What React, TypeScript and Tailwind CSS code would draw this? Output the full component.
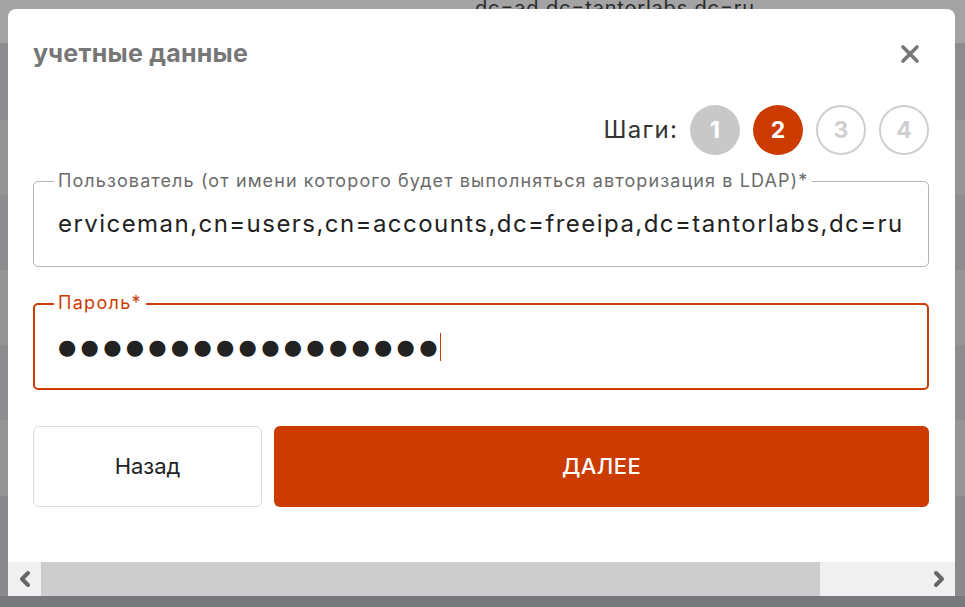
import { ChevronLeft, ChevronRight } from "lucide-react";

const USER_DN =
  "erviceman,cn=users,cn=accounts,dc=freeipa,dc=tantorlabs,dc=ru";

// полосы строк таблицы под затемнением
const BANDS = [
  "h-[43px] bg-[#a3a3a3]",
  "h-[77px] bg-[#8d8d8f]",
  "h-[75px] bg-[#959596]",
  "h-[75px] bg-[#8d8d8f]",
  "h-[75px] bg-[#959596]",
  "h-[75px] bg-[#8d8d8f]",
  "h-[76px] bg-[#959596]",
  "flex-1 bg-[#8a8a8c]",
];

function Steps({ current }: { current: number }) {
  return (
    <div className="flex items-center justify-end gap-[13px]">
      <span className="mr-[-1px] text-[24px] tracking-[1.2px] text-[#333]">Шаги:</span>
      {[1, 2, 3, 4].map((n) => {
        const cls =
          n < current
            ? "bg-[#c8c8c8] text-white"
            : n === current
              ? "bg-[#cc3b01] text-white"
              : "border-2 border-[#cfcfcf] text-[#cfcfcf]";
        return (
          <div
            key={n}
            className={`flex h-[50px] w-[50px] items-center justify-center rounded-full text-[23px] font-bold ${cls}`}
          >
            {n}
          </div>
        );
      })}
    </div>
  );
}

export default function App() {
  return (
    <div className="relative h-[607px] w-[965px] overflow-hidden font-['Inter',sans-serif]">
      {/* фон страницы под модалкой */}
      <div className="flex h-full flex-col">
        {BANDS.map((b, i) => (
          <div key={i} className={b}>
            {i === 0 && (
              <div className="ml-[475px] mt-[-4px] text-[20px] leading-[24px] tracking-[0.04em] text-[#2a2a2a]">
                dc=ad,dc=tantorlabs,dc=ru
              </div>
            )}
          </div>
        ))}
        <div className="h-[11px] bg-[#77787b]" />
      </div>

      {/* модальное окно */}
      <div className="absolute left-[8px] top-[9px] flex h-[587px] w-[947px] flex-col rounded-t-[8px] bg-white">
        <div className="flex flex-1 flex-col pl-[25px] pr-[26px]">
          <div className="flex h-[96px] items-center justify-between pb-[6px]">
            <h2 className="text-[25px] font-bold tracking-[0.01em] text-[#777]">
              учетные данные
            </h2>
            <button type="button" aria-label="Закрыть" className="mr-[5px] p-1">
              <svg width="20" height="20" viewBox="0 0 20 20">
                <path
                  d="M3 3 L17 17 M17 3 L3 17"
                  stroke="#777"
                  strokeWidth="3.6"
                  strokeLinecap="round"
                />
              </svg>
            </button>
          </div>

          <Steps current={2} />

          {/* пользователь */}
          <div className="relative mt-[26px] flex h-[86px] items-center rounded-[5px] border border-[#b3b3b3] pl-[24px]">
            <span className="absolute left-[20px] top-[-12px] bg-white px-[4px] text-[18px] leading-[22px] tracking-[1.1px] text-[#6b6b6b]">
              Пользователь (от имени которого будет выполняться авторизация в LDAP)*
            </span>
            <span className="whitespace-nowrap text-[24px] tracking-[1.45px] text-[#222]">
              {USER_DN}
            </span>
          </div>

          {/* пароль */}
          <div className="relative mt-[36px] flex h-[87px] items-center rounded-[5px] border-2 border-[#cc3b01] pl-[23px]">
            <span className="absolute left-[19px] top-[-13px] bg-white px-[4px] text-[18px] leading-[22px] tracking-[1.3px] text-[#cc3b01]">
              Пароль*
            </span>
            <span className="font-['DejaVu_Sans',sans-serif] text-[21px] leading-[28px] tracking-[4.25px] text-[#222]">
              {"●".repeat(17)}
            </span>
            <span className="ml-[-2px] h-[28px] w-[1.5px] bg-[#cc3b01]" />
          </div>

          <div className="mt-[36px] flex gap-[12px]">
            <button
              type="button"
              className="h-[81px] w-[229px] rounded-[6px] border border-[#dcdcdc] bg-white text-[22px] text-[#222]"
            >
              Назад
            </button>
            <button
              type="button"
              className="h-[81px] flex-1 rounded-[6px] bg-[#cc3b01] text-[22px] font-medium uppercase tracking-[0.02em] text-white"
            >
              Далее
            </button>
          </div>
        </div>

        {/* горизонтальный скроллбар */}
        <div className="flex h-[34px] bg-[#f0f0f0]">
          <div className="flex w-[33px] items-center justify-center text-[#666]">
            <ChevronLeft size={24} strokeWidth={4} />
          </div>
          <div className="w-[779px] bg-[#cdcdcd]" />
          <div className="flex flex-1 items-center justify-end pr-[4px] text-[#666]">
            <ChevronRight size={24} strokeWidth={4} />
          </div>
        </div>
      </div>
    </div>
  );
}
